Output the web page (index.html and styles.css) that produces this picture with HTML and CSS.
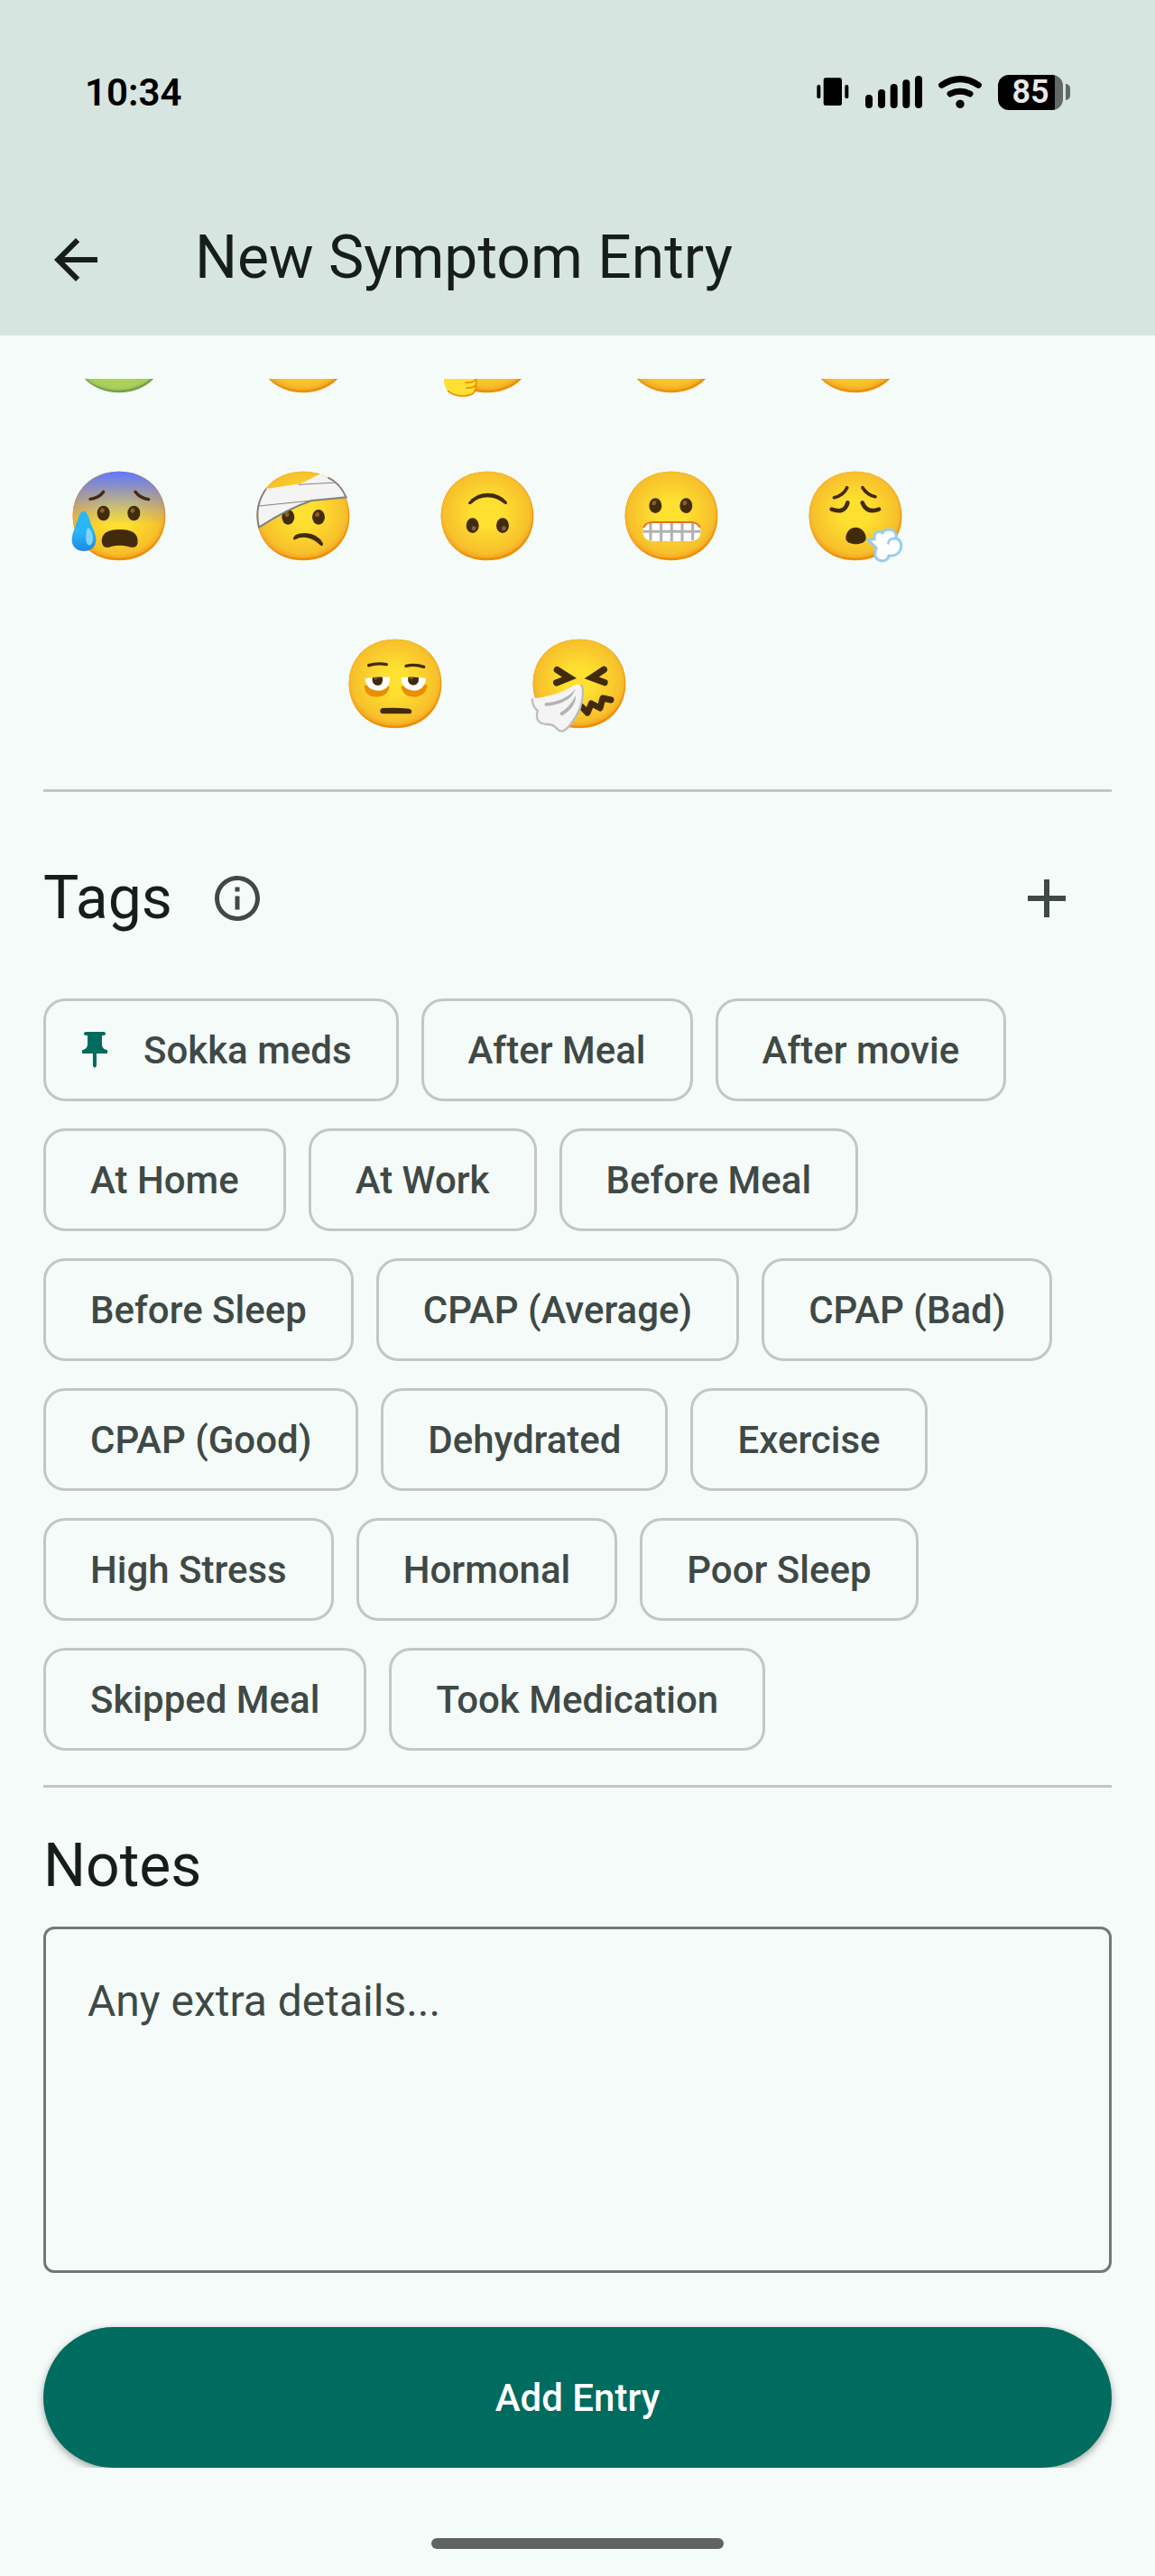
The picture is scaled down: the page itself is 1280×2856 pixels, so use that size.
FILE: index.html
```html
<!DOCTYPE html>
<html lang="en">

<head>
    <meta charset="UTF-8">
    <meta name="viewport" content="width=device-width, initial-scale=1.0">
    <title>New Symptom Entry</title>
    <link rel="stylesheet" href="styles.css">
</head>

<body>
    <!-- shared shapes for the emoji -->
    <svg class="defs" aria-hidden="true">
        <defs>
            <radialGradient id="yellow" cx="50%" cy="48%" r="53%">
                <stop offset="0.3" stop-color="#fde030" />
                <stop offset="0.88" stop-color="#f7c02b" />
                <stop offset="1" stop-color="#f4a223" />
            </radialGradient>
            <radialGradient id="green" cx="50%" cy="48%" r="53%">
                <stop offset="0.3" stop-color="#e0d94a" />
                <stop offset="0.92" stop-color="#a5cf5c" />
                <stop offset="1" stop-color="#93c05a" />
            </radialGradient>
            <linearGradient id="cold" x1="0" y1="0" x2="0" y2="1">
                <stop offset="0" stop-color="#6078ff" />
                <stop offset="0.6" stop-color="#6078ff" stop-opacity="0" />
            </linearGradient>
            <linearGradient id="drop" x1="0" y1="0" x2="0" y2="1">
                <stop offset="0.5" stop-color="#29b6f6" />
                <stop offset="1" stop-color="#1e88e5" />
            </linearGradient>
            <path id="disc" d="M26 180C26 94 91 32 180 32S334 94 334 180S269 328 180 328S26 266 26 180Z" />
            <path id="disc-top" d="M26 178C26 92 91 32 180 32S331 94 331 177S266 320 178 320S26 264 26 178Z" />
            <g id="face">
                <use href="#disc" fill="#eb8f00" />
                <use href="#disc-top" fill="url(#yellow)" />
            </g>
            <g id="eye">
                <ellipse rx="21" ry="25" fill="#422b0d" />
                <ellipse cx="-7" cy="-7" rx="7" ry="8" fill="#896024" transform="rotate(20)" />
            </g>
        </defs>
    </svg>

    <header class="header">
        <div class="status">
            <span class="time">10:34</span>
            <div class="status-icons">
                <svg width="36" height="36" viewBox="0 0 108 108">
                    <rect x="1" y="30" width="12" height="46" rx="6" />
                    <rect x="23" y="7" width="61" height="92" rx="7" />
                    <rect x="94" y="30" width="12" height="46" rx="6" />
                </svg>
                <svg width="63" height="36" viewBox="0 0 189 108">
                    <rect x="0" y="63" width="24" height="45" rx="12" />
                    <rect x="42" y="45" width="24" height="63" rx="12" />
                    <rect x="83" y="27" width="24" height="81" rx="12" />
                    <rect x="124" y="13" width="24" height="95" rx="12" />
                    <rect x="165" y="0" width="24" height="108" rx="12" />
                </svg>
                <svg width="48" height="36" viewBox="0 0 144 108">
                    <path d="M11 31Q72-9 133 31M39 60Q72 43 105 60" fill="none" stroke="#000" stroke-width="21" stroke-linecap="round" />
                    <circle cx="72" cy="94" r="14" />
                </svg>
                <div class="battery">
                    <span class="battery-level">85</span>
                    <span class="battery-tip"></span>
                </div>
            </div>
        </div>
        <div class="app-bar">
            <button class="icon-btn" aria-label="Back">
                <svg width="72" height="72" viewBox="0 0 24 24">
                    <path d="M20 11H7.83l5.59-5.59L12 4l-8 8 8 8 1.41-1.41L7.83 13H20v-2z" />
                </svg>
            </button>
            <h1>New Symptom Entry</h1>
        </div>
    </header>

    <main class="content">
        <div class="emoji-scroll">
            <div class="emoji-grid">
                <button class="emoji" aria-label="Nauseated">
                    <svg viewBox="0 0 360 360">
                        <use href="#disc" fill="#78a048" />
                        <use href="#disc-top" fill="url(#green)" />
                    </svg>
                </button>
                <button class="emoji" aria-label="Sad">
                    <svg viewBox="0 0 360 360"><use href="#face" /></svg>
                </button>
                <button class="emoji" aria-label="Thinking">
                    <svg viewBox="0 0 360 360">
                        <use href="#face" />
                        <path d="M36 262V290Q42 341 98 341Q128 341 138 324Q145 314 142 300Q146 290 142 276L130 262Z" fill="#ffdf32" />
                        <path d="M50 323Q68 339 98 339Q128 340 138 324Q144 314 142 302Q146 292 142 278M108 294Q130 297 141 284M110 312Q130 314 141 304" fill="none" stroke="#eb8f00" stroke-width="5" stroke-linecap="round" />
                    </svg>
                </button>
                <button class="emoji" aria-label="Tired">
                    <svg viewBox="0 0 360 360"><use href="#face" /></svg>
                </button>
                <button class="emoji" aria-label="Pain">
                    <svg viewBox="0 0 360 360"><use href="#face" /></svg>
                </button>

                <button class="emoji" aria-label="Anxious">
                    <svg viewBox="0 0 360 360">
                        <use href="#face" />
                        <use href="#disc" fill="url(#cold)" />
                        <path d="M84 124Q113 121 128 100M234 100Q249 121 278 125" fill="none" stroke="#422b0d" stroke-width="10" stroke-linecap="round" />
                        <use href="#eye" x="128" y="171" />
                        <use href="#eye" x="229" y="171" />
                        <path d="M122 262Q124 225 182 225Q240 225 242 262Q243 285 224 285Q214 284 208 281Q182 275 156 281Q148 285 139 285Q122 284 122 262Z" fill="#422b0d" />
                        <path d="M63 164C75 164 80 190 90 215C98 232 103 245 103 260C103 283 85 297 63 297C41 297 23 283 23 260C23 240 32 226 38 205C46 182 50 164 63 164Z" fill="url(#drop)" />
                        <path d="M77 221C84 221 93 238 93 254C93 268 88 277 81 277C74 277 70 268 70 254C70 240 71 221 77 221Z" fill="#81d4fa" />
                    </svg>
                </button>
                <button class="emoji" aria-label="Head injury">
                    <svg viewBox="0 0 360 360">
                        <use href="#face" />
                        <use href="#eye" x="130" y="184" />
                        <use href="#eye" x="231" y="184" />
                        <path d="M147 257Q148 237 187 237Q232 240 246 272Q247 281 238 278Q215 256 190 252Q170 249 155 258Q149 261 147 257Z" fill="#422b0d" />
                        <path d="M57 90L171 73L235 41Q297 62 323 118L208 129Q130 155 33 218Q14 146 57 90Z" fill="#f4f4f4" />
                        <path d="M57 90Q16 146 33 218Q130 155 208 129L323 118Q302 70 262 52" fill="none" stroke="#82827f" stroke-width="6" />
                        <path d="M32 147L208 129M165 76L289 69" fill="none" stroke="#82827f" stroke-width="3" />
                    </svg>
                </button>
                <button class="emoji" aria-label="Upside down">
                    <svg viewBox="0 0 360 360">
                        <use href="#face" />
                        <path d="M117 136Q140 104 181 104Q222 104 245 133Q248 143 238 140Q210 118 181 118Q150 118 126 140Q115 143 117 136Z" fill="#422b0d" />
                        <use href="#eye" transform="translate(131 212) rotate(180)" />
                        <use href="#eye" transform="translate(231 212) rotate(180)" />
                    </svg>
                </button>
                <button class="emoji" aria-label="Grimacing">
                    <svg viewBox="0 0 360 360">
                        <use href="#face" />
                        <use href="#eye" x="127" y="146" />
                        <use href="#eye" x="229" y="146" />
                        <rect x="85" y="201" width="193" height="63" rx="30" fill="#fff" />
                        <path d="M111 204V262M146 201V264M181 201V264M216 201V264M251 204V262M86 232H277" stroke="#b0b0b0" stroke-width="9" />
                        <path d="M88 219Q95 201 118 201H245Q268 201 275 219" fill="none" stroke="#e2702a" stroke-width="6" />
                    </svg>
                </button>
                <button class="emoji" aria-label="Exhaling">
                    <svg viewBox="0 0 360 360">
                        <use href="#face" />
                        <path d="M109 119Q140 112 152 86M204 86Q219 110 246 116" fill="none" stroke="#422b0d" stroke-width="11" stroke-linecap="round" />
                        <path d="M101 158Q144 174 154 136M203 136Q218 173 258 158" fill="none" stroke="#422b0d" stroke-width="14" stroke-linecap="round" />
                        <path d="M148 254C148 232 164 218 181 218C199 218 215 234 215 254C215 280 148 280 148 254Z" fill="#422b0d" />
                        <path d="M221 259L244 257C238 236 258 227 270 237C278 218 320 220 315 254C345 264 335 318 291 312C288 338 238 336 246 298L250 287Z" fill="#fff" stroke="#95cdee" stroke-width="9" stroke-linejoin="round" />
                        <path d="M289 271Q290 253 315 256" fill="none" stroke="#95cdee" stroke-width="8" stroke-linecap="round" />
                    </svg>
                </button>

                <button class="emoji" aria-label="Exhausted">
                    <svg viewBox="0 0 360 360">
                        <use href="#face" />
                        <path d="M92 119Q120 110 151 116M216 121Q246 114 275 124" fill="none" stroke="#422b0d" stroke-width="10" stroke-linecap="round" />
                        <path d="M77 185Q78 224 119 224Q158 222 161 188ZM200 188Q204 224 246 224Q284 220 287 184Z" fill="#eb8f00" />
                        <path d="M80 163Q120 156 163 158Q163 203 123 203Q82 201 80 163ZM199 160Q240 155 282 162Q277 203 242 203Q202 201 199 160Z" fill="#fff" />
                        <path d="M104 160Q121 157 138 158Q141 185 121 186Q101 184 104 160ZM223 158Q240 157 258 160Q260 184 241 185Q219 184 223 158Z" fill="#422b0d" />
                        <path d="M110 160H122Q117 170 110 165ZM229 159H241Q236 169 229 164Z" fill="#896024" />
                        <path d="M139 261Q182 258 226 263Q235 266 235 272Q235 281 222 280H139Q130 280 130 271Q130 262 139 261Z" fill="#422b0d" />
                    </svg>
                </button>
                <button class="emoji" aria-label="Sneezing">
                    <svg viewBox="0 0 360 360">
                        <use href="#face" />
                        <path d="M106 134L147 160L104 177M262 133L221 160L264 176" fill="none" stroke="#422b0d" stroke-width="22" stroke-linecap="round" />
                        <path d="M188 257L207 277L220 246L249 261L258 228L285 234" fill="none" stroke="#422b0d" stroke-width="21" stroke-linecap="round" stroke-linejoin="round" />
                        <path d="M24 229Q105 222 160 187Q190 173 192 204Q194 262 155 311Q126 352 108 332Q92 315 74 316Q30 314 40 273Q22 252 24 229Z" fill="#f4f4f4" />
                        <path d="M24 229Q22 252 41 270Q30 314 74 315Q92 314 106 330Q125 352 153 312Q193 262 192 204Q192 190 185 184" fill="none" stroke="#bdbdbd" stroke-width="7" />
                        <path d="M167 197Q155 244 70 255Q60 251 67 244Q135 238 167 197ZM168 220Q170 257 124 286Q114 285 116 277Q148 259 168 220Z" fill="#b3b3b3" />
                    </svg>
                </button>
            </div>
        </div>

        <section class="tags">
            <div class="section-head">
                <h2>Tags</h2>
                <button class="icon-btn muted" aria-label="About tags">
                    <svg width="60" height="60" viewBox="0 0 24 24">
                        <path d="M11 7h2v2h-2zm0 4h2v6h-2zm1-9C6.48 2 2 6.48 2 12s4.48 10 10 10 10-4.48 10-10S17.52 2 12 2zm0 18c-4.41 0-8-3.59-8-8s3.59-8 8-8 8 3.59 8 8-3.59 8-8 8z" />
                    </svg>
                </button>
                <button class="icon-btn muted add-tag" aria-label="Add tag">
                    <svg width="72" height="72" viewBox="0 0 24 24">
                        <path d="M19 13h-6v6h-2v-6H5v-2h6V5h2v6h6v2z" />
                    </svg>
                </button>
            </div>
            <div class="chips">
                <button class="chip pinned">
                    <svg width="48" height="48" viewBox="0 0 24 24">
                        <path d="M16 9V4h1c.55 0 1-.45 1-1s-.45-1-1-1H7c-.55 0-1 .45-1 1s.45 1 1 1h1v5c0 1.66-1.34 3-3 3v2h5.97v7l1 1 1-1v-7H19v-2c-1.66 0-3-1.34-3-3z" />
                    </svg>
                    Sokka meds
                </button>
                <button class="chip">After Meal</button>
                <button class="chip">After movie</button>
                <button class="chip">At Home</button>
                <button class="chip">At Work</button>
                <button class="chip">Before Meal</button>
                <button class="chip">Before Sleep</button>
                <button class="chip">CPAP (Average)</button>
                <button class="chip">CPAP (Bad)</button>
                <button class="chip">CPAP (Good)</button>
                <button class="chip">Dehydrated</button>
                <button class="chip">Exercise</button>
                <button class="chip">High Stress</button>
                <button class="chip">Hormonal</button>
                <button class="chip">Poor Sleep</button>
                <button class="chip">Skipped Meal</button>
                <button class="chip">Took Medication</button>
            </div>
        </section>

        <section class="notes">
            <h2><label for="notes">Notes</label></h2>
            <textarea id="notes" placeholder="Any extra details..."></textarea>
        </section>

        <div class="actions">
            <button class="submit">Add Entry</button>
        </div>
    </main>

    <div class="home-bar"></div>
</body>

</html>
```
FILE: styles.css
```css
* {
    box-sizing: border-box;
}

body {
    display: flex;
    flex-direction: column;
    min-height: 100vh;
    margin: 0;
    font-family: Roboto, sans-serif;
    color: #171d1b;
    background-color: #f5fbf8;
}

button {
    padding: 0;
    border: none;
    background: none;
    font-family: inherit;
    color: inherit;
    cursor: pointer;
}

svg {
    display: block;
    flex-shrink: 0;
}

h1,
h2 {
    margin: 0;
    font-size: 66px;
    font-weight: 400;
    line-height: 84px;
}

.defs {
    position: absolute;
    width: 0;
    height: 0;
}

/* Header */
.header {
    background-color: #d7e5e1;
}

.status {
    display: flex;
    align-items: center;
    justify-content: space-between;
    height: 204px;
    padding: 0 94px;
    color: #000;
}

.time {
    font-size: 42px;
    font-weight: 600;
}

.status-icons {
    display: flex;
    align-items: center;
    gap: 18px;
}

.battery {
    display: flex;
    align-items: center;
    gap: 3px;
}

.battery-level {
    width: 72px;
    border-radius: 12px;
    font-size: 36px;
    font-weight: 600;
    line-height: 39px;
    text-align: center;
    color: #e8e8e8;
    background: linear-gradient(to right, #000 87%, #626867 87%);
}

.battery-tip {
    width: 5px;
    height: 18px;
    border-radius: 0 5px 5px 0;
    background-color: #626867;
}

.app-bar {
    display: flex;
    align-items: center;
    gap: 96px;
    height: 168px;
    padding: 0 48px;
}

.app-bar h1 {
    padding-bottom: 4px;
}

.icon-btn {
    fill: #171d1b;
}

.muted {
    fill: #3f4946;
}

/* Emoji picker, scrolled part way down */
.content {
    flex: 1;
    padding-top: 48px;
}

.emoji-scroll {
    overflow: hidden;
    padding: 0 200px 24px 0;
}

.emoji-grid {
    display: flex;
    flex-wrap: wrap;
    justify-content: center;
    margin-top: -127px;
}

.emoji {
    display: flex;
    align-items: center;
    justify-content: center;
    width: 204px;
    height: 186px;
}

.emoji svg {
    width: 120px;
    height: 120px;
}

/* Tags */
.tags,
.notes {
    margin: 0 48px;
    border-top: 3px solid #bec9c6;
}

.tags {
    padding: 58px 0 38px;
}

.section-head {
    display: flex;
    align-items: center;
    gap: 42px;
    height: 120px;
    margin-bottom: 51px;
}

.add-tag {
    margin-left: auto;
    margin-right: 36px;
}

.chips {
    display: flex;
    flex-wrap: wrap;
    gap: 30px 25px;
}

.chip {
    display: flex;
    align-items: center;
    gap: 30px;
    height: 114px;
    padding: 0 49px;
    border: 3px solid #bec9c6;
    border-radius: 24px;
    font-size: 42px;
    font-weight: 500;
    color: #3f4946;
}

.pinned {
    padding-left: 30px;
    fill: #006b5f;
}

/* Notes */
.notes {
    padding-top: 45px;
}

.notes textarea {
    display: block;
    width: 100%;
    height: 384px;
    margin-top: 25px;
    padding: 48px 46px;
    border: 3px solid #6f7976;
    border-radius: 12px;
    font-family: inherit;
    font-size: 48px;
    line-height: 64px;
    color: #171d1b;
    background: none;
    resize: none;
}

.notes textarea::placeholder {
    color: #3f4946;
    opacity: 1;
}

.actions {
    overflow: hidden;
    padding: 60px 48px 0;
}

.submit {
    width: 100%;
    height: 156px;
    border-radius: 78px;
    font-size: 42px;
    font-weight: 500;
    color: #fff;
    background-color: #006b5f;
    box-shadow: 0 3px 8px rgba(0, 0, 0, 0.35);
}

.home-bar {
    width: 324px;
    height: 12px;
    margin: 78px auto 30px;
    border-radius: 6px;
    background-color: #616362;
}
```
